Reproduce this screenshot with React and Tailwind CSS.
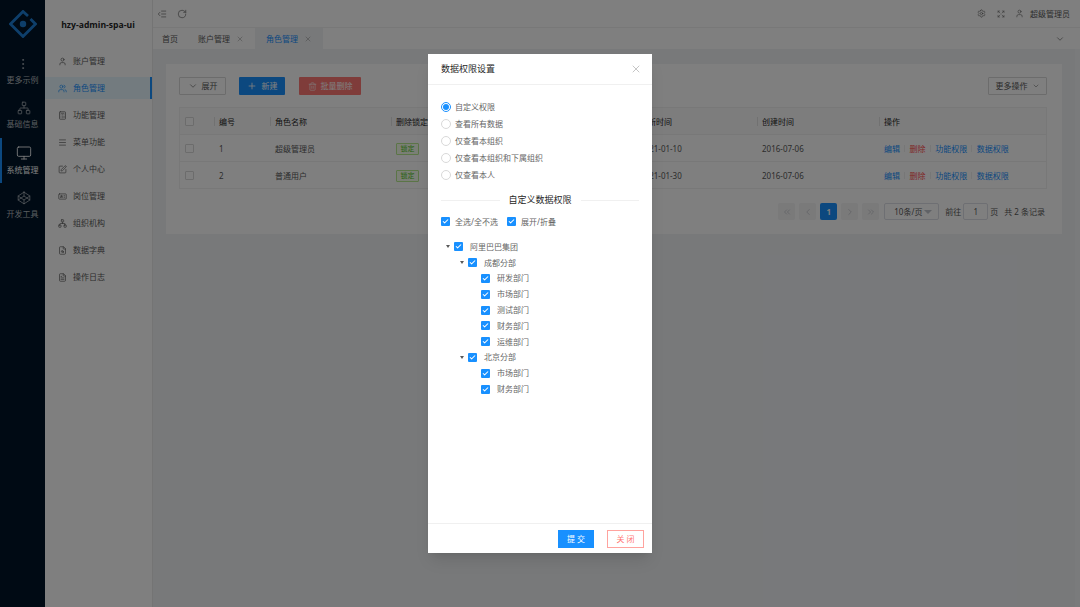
import React from "react";
import {
  ChevronDown, ChevronLeft, ChevronRight, ChevronsLeft, ChevronsRight, Plus, Trash2, X, RotateCw,
  Settings, Expand, User, Users, Monitor, Network, Codepen, MoreVertical, Calculator, Menu,
  SquarePen, IdCard, FileSearch, FileText, IndentDecrease, Check,
} from "lucide-react";

const darkMenu = [
  {label: "基础信息", icon: Network},
  {label: "系统管理", icon: Monitor, active: true},
  {label: "开发工具", icon: Codepen},
];

const menu = [
  {label: "账户管理", icon: User},
  {label: "角色管理", icon: Users, active: true},
  {label: "功能管理", icon: Calculator},
  {label: "菜单功能", icon: Menu},
  {label: "个人中心", icon: SquarePen},
  {label: "岗位管理", icon: IdCard},
  {label: "组织机构", icon: Network},
  {label: "数据字典", icon: FileSearch},
  {label: "操作日志", icon: FileText},
];

const roles = [
  {id: 1, name: "超级管理员", updated: "2021-01-10", created: "2016-07-06"},
  {id: 2, name: "普通用户", updated: "2021-01-30", created: "2016-07-06"},
];

const radios = ["自定义权限", "查看所有数据", "仅查看本组织", "仅查看本组织和下属组织", "仅查看本人"];

const tree = [
  {label: "阿里巴巴集团", level: 0, caret: true},
  {label: "成都分部", level: 1, caret: true},
  {label: "研发部门", level: 2},
  {label: "市场部门", level: 2},
  {label: "测试部门", level: 2},
  {label: "财务部门", level: 2},
  {label: "运维部门", level: 2},
  {label: "北京分部", level: 1, caret: true},
  {label: "市场部门", level: 2},
  {label: "财务部门", level: 2},
];

const rowCols = "grid grid-cols-[34px_56px_121px_122px_122px_122px_122px_1fr] items-center";

const Logo = () => (
  <svg width="28" height="28" viewBox="0 0 28 28" fill="none">
    <path d="M19 6 L14 1.5 L1.5 14 L14 26.5 L26.5 14 L21.5 9" stroke="#1d7fd6" strokeWidth="2.8" />
    <circle cx="14" cy="14" r="3.2" fill="#1d7fd6" />
  </svg>
);

const Box = ({checked, className = ""}) => (
  <span className={`flex h-[9px] w-[9px] shrink-0 items-center justify-center rounded-[1px] ${checked ? "bg-[#1890ff]" : "border border-[#d9d9d9] bg-white"} ${className}`}>
    {checked && <Check size={7} strokeWidth={3.5} className="text-white" />}
  </span>
);

const Th = ({children}) => (
  <div className="relative flex h-full items-center px-[5px] pt-px text-[#262626]">
    <span className="absolute left-0 top-[9px] h-[9px] w-px bg-[#e3e3e3]" />
    {children}
  </div>
);

const PageBtn = ({children, active}) => (
  <span className={`flex h-[17px] w-[17px] items-center justify-center rounded-[2px] ${active ? "bg-[#1890ff] font-bold text-white" : "bg-[#f4f4f5] text-[#a8abb2]"}`}>
    {children}
  </span>
);

const Sep = () => <span className="mx-[4.3px] h-[7px] w-px bg-[#eeeeee]" />;

const App = () => {
  return (
    <div className="relative flex h-[607px] w-[1080px] overflow-hidden bg-[#f0f2f5] font-['Noto_Sans','Noto_Sans_CJK_SC',sans-serif] text-[8px] text-[#595959]">
      {/* dark rail */}
      <div className="flex w-[45px] shrink-0 flex-col bg-[#001529] text-[#b3b9bf]">
        <div className="flex h-[48px] items-center justify-center"><Logo /></div>
        <div className="flex h-[45px] flex-col items-center justify-end pb-[7px]">
          <MoreVertical size={14} strokeWidth={1.2} className="mb-[3px]" />
          <span>更多示例</span>
        </div>
        {darkMenu.map(item => (
          <div key={item.label} className={`flex h-[45px] flex-col items-center justify-center border-l-2 ${item.active ? "border-[#1890ff] text-white" : "border-transparent"}`}>
            <item.icon size={item.active ? 16 : 14} strokeWidth={1.3} className="mb-[3px]" />
            <span className="-ml-[2px]">{item.label}</span>
          </div>
        ))}
      </div>

      {/* sub menu */}
      <div className="flex w-[108px] shrink-0 flex-col border-r border-[#e8e8e8] bg-white">
        <div className="flex h-[50px] items-center justify-center pr-[1px] font-['Open_Sans',sans-serif] text-[8.6px] font-bold text-[#262626]">hzy-admin-spa-ui</div>
        <div className="flex flex-col gap-[5px]">
          {menu.map(item => (
            <div key={item.label} className={`flex h-[22px] items-center gap-[6px] pl-[13px] ${item.active ? "border-r-2 border-[#1890ff] bg-[#e6f7ff] text-[#1890ff]" : ""}`}>
              <item.icon size={9} strokeWidth={1.8} />
              <span>{item.label}</span>
            </div>
          ))}
        </div>
      </div>

      {/* main */}
      <div className="flex min-w-0 flex-1 flex-col">
        <div className="flex h-[28px] shrink-0 items-center justify-between border-b border-[#f0f0f0] bg-white pl-[4px] pr-[10px]">
          <div className="flex items-center gap-[10px]">
            <IndentDecrease size={10} strokeWidth={1.5} />
            <RotateCw size={10} strokeWidth={1.5} />
          </div>
          <div className="flex items-center">
            <Settings size={9} strokeWidth={1.5} />
            <Expand size={8} strokeWidth={1.5} className="ml-[11px]" />
            <User size={9} strokeWidth={1.5} className="ml-[10px]" />
            <span className="ml-[6px]">超级管理员</span>
          </div>
        </div>
        <div className="flex h-[21px] shrink-0 items-stretch bg-white">
          <div className="flex items-center pl-[9px] pr-[20px]">首页</div>
          <div className="flex w-[57px] items-center gap-[6px]">账户管理<X size={8} strokeWidth={1.5} className="text-[#8c8c8c]" /></div>
          <div className="flex w-[68px] items-center gap-[6px] bg-[#f0f2f5] pl-[11px] text-[#1890ff]">角色管理<X size={8} strokeWidth={1.5} className="text-[#8c8c8c]" /></div>
          <div className="ml-auto flex items-center pr-[15px]"><ChevronDown size={10} strokeWidth={1.5} /></div>
        </div>

        <div className="flex min-h-0 flex-1">
          <div className="min-w-0 flex-1 px-[13px] pt-[15px]">
            <div className="flex h-[170px] flex-col bg-white pl-[13px] pr-[15px] pt-[13px]">
              <div className="flex h-[18px] items-center">
                <button className="flex h-[18px] w-[47px] items-center justify-center gap-[4px] rounded-[1px] border border-[#d9d9d9]"><ChevronDown size={10} strokeWidth={1.5} />展开</button>
                <button className="ml-[13px] flex h-[18px] w-[46px] items-center justify-center gap-[5px] rounded-[1px] bg-[#1890ff] text-white"><Plus size={10} strokeWidth={2} />新建</button>
                <button className="ml-[14px] flex h-[18px] w-[62px] items-center justify-center gap-[4px] rounded-[1px] bg-[#ff7875] text-white"><Trash2 size={9} strokeWidth={1.5} />批量删除</button>
                <button className="ml-auto flex h-[18px] w-[59px] items-center justify-center gap-[4px] rounded-[1px] border border-[#d9d9d9]">更多操作<ChevronDown size={8} strokeWidth={1.5} /></button>
              </div>

              <div className="mt-[12px] border border-b-0 border-[#f0f0f0]">
                <div className={`${rowCols} h-[27px] border-b border-[#f0f0f0] bg-[#fafafa]`}>
                  <div className="pl-[5px]"><Box /></div>
                  <Th>编号</Th>
                  <Th>角色名称</Th>
                  <Th>删除锁定</Th>
                  <Th>备注</Th>
                  <Th>更新时间</Th>
                  <Th>创建时间</Th>
                  <Th>操作</Th>
                </div>
                {roles.map(role => (
                  <div key={role.id} className={`${rowCols} h-[27px] border-b border-[#f0f0f0] pt-px`}>
                    <div className="pl-[5px]"><Box /></div>
                    <div className="px-[5px]">{role.id}</div>
                    <div className="px-[5px]">{role.name}</div>
                    <div className="px-[5px]">
                      <span className="inline-flex h-[12px] w-[23px] items-center justify-center rounded-[1px] border border-[#b7eb8f] bg-[#f6ffed] text-[7px] text-[#52c41a]">锁定</span>
                    </div>
                    <div className="px-[5px]" />
                    <div className="px-[5px]">{role.updated}</div>
                    <div className="px-[5px]">{role.created}</div>
                    <div className="flex items-center px-[5px] text-[#1890ff]">
                      <span>编辑</span><Sep />
                      <span className="text-[#ff4d4f]">删除</span><Sep />
                      <span>功能权限</span><Sep />
                      <span>数据权限</span>
                    </div>
                  </div>
                ))}
              </div>

              <div className="mt-[14px] flex h-[17px] items-center justify-end pr-[2px]">
                <div className="flex gap-[4px]">
                  <PageBtn><ChevronsLeft size={10} strokeWidth={1.2} /></PageBtn>
                  <PageBtn><ChevronLeft size={10} strokeWidth={1.2} /></PageBtn>
                  <PageBtn active>1</PageBtn>
                  <PageBtn><ChevronRight size={10} strokeWidth={1.2} /></PageBtn>
                  <PageBtn><ChevronsRight size={10} strokeWidth={1.2} /></PageBtn>
                </div>
                <div className="ml-[5px] flex h-[17px] w-[55px] items-center justify-between rounded-[2px] border border-[#dcdfe6] pl-[9px] pr-[6px]">
                  <span>10条/页</span>
                  <span className="h-0 w-0 border-x-[4px] border-t-[4px] border-x-transparent border-t-[#c0c4cc]" />
                </div>
                <span className="ml-[6px]">前往</span>
                <span className="ml-[2px] flex h-[17px] w-[25px] items-center justify-center rounded-[2px] border border-[#dcdfe6]">1</span>
                <span className="ml-[2px]">页</span>
                <span className="ml-[6px]">共 2 条记录</span>
              </div>
            </div>
          </div>
          <div className="w-[5px] shrink-0 bg-[#f5f6f8]" />
        </div>
      </div>

      {/* dialog */}
      <div className="absolute inset-0 flex justify-center bg-black/50 pt-[54px]">
        <div className="flex h-[499px] w-[224px] flex-col bg-white shadow-lg">
          <div className="flex h-[31px] shrink-0 items-center justify-between border-b border-[#f0f0f0] pl-[13px] pr-[10px]">
            <span className="text-[9px] text-[#262626]">数据权限设置</span>
            <X size={12} strokeWidth={1} className="text-[#8c8c8c]" />
          </div>

          <div className="flex-1 px-[13px] pt-[13px] text-[#666666]">
            <div className="flex flex-col">
              {radios.map((label, i) => (
                <div key={label} className="flex h-[17px] items-center gap-[4px]">
                  <span className={`flex h-[10px] w-[10px] items-center justify-center rounded-full border ${i === 0 ? "border-[#1890ff]" : "border-[#d9d9d9]"}`}>
                    {i === 0 && <span className="h-[6px] w-[6px] rounded-full bg-[#1890ff]" />}
                  </span>
                  <span>{label}</span>
                </div>
              ))}
            </div>

            <div className="mt-[8px] flex h-[18px] items-center gap-[9px] text-[9px] text-[#262626]">
              <span className="h-px flex-1 bg-[#f0f0f0]" />
              <span>自定义数据权限</span>
              <span className="h-px flex-1 bg-[#f0f0f0]" />
            </div>

            <div className="mt-[4px] flex h-[17px] items-center">
              <Box checked />
              <span className="ml-[5px]">全选/全不选</span>
              <Box checked className="ml-[9px]" />
              <span className="ml-[5px]">展开/折叠</span>
            </div>

            <div className="mt-[9px] flex flex-col">
              {tree.map((node, i) => (
                <div key={i} className={`flex h-[15.8px] items-center ${node.level === 0 ? "pl-[5px]" : node.level === 1 ? "pl-[19px]" : "pl-[40px]"}`}>
                  {node.caret && <span className="mr-[4px] h-0 w-0 border-x-[2.5px] border-t-[3px] border-x-transparent border-t-[#595959]" />}
                  <Box checked />
                  <span className="ml-[7px]">{node.label}</span>
                </div>
              ))}
            </div>
          </div>

          <div className="flex h-[30px] shrink-0 items-center justify-end gap-[13px] border-t border-[#f0f0f0] pr-[8px]">
            <button className="flex h-[18px] w-[36px] items-center justify-center bg-[#1890ff] pl-[2px] tracking-[2px] text-white">提交</button>
            <button className="flex h-[18px] w-[37px] items-center justify-center border border-[#ffa39e] pl-[2px] tracking-[2px] text-[#ff7875]">关闭</button>
          </div>
        </div>
      </div>
    </div>
  );
};

export default App;
